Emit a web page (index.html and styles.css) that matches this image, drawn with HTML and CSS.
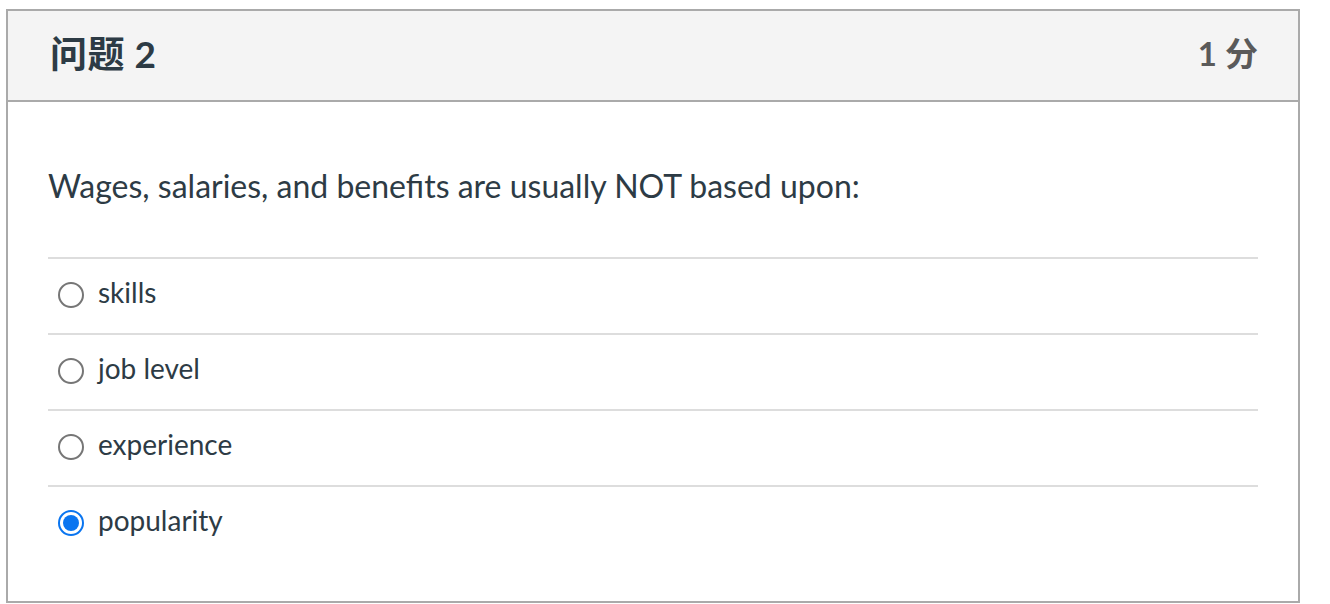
FILE: index.html
```html
<!DOCTYPE html>
<html lang="zh">
<head>
<meta charset="utf-8">
<link rel="stylesheet" href="styles.css">
</head>
<body>
<div class="question">
  <div class="q-header">
    <h2 class="q-title">问题 2</h2>
    <span class="q-points">1 分</span>
  </div>
  <div class="q-body">
    <p class="q-text">Wages, salaries, and benefits are usually NOT based upon:</p>
    <ul class="answers">
      <li class="answer"><span class="radio"></span><span class="label">skills</span></li>
      <li class="answer"><span class="radio"></span><span class="label">job level</span></li>
      <li class="answer"><span class="radio"></span><span class="label">experience</span></li>
      <li class="answer"><span class="radio checked"></span><span class="label">popularity</span></li>
    </ul>
  </div>
</div>
</body>
</html>
```

FILE: styles.css
```css
html, body {
  margin: 0;
  padding: 0;
  background: #fff;
}
body {
  padding: 9px 0 0 6px;
  font-family: Lato, "Noto Sans CJK SC", sans-serif;
  color: #2d3b45;
}
.question {
  width: 1294px;
  height: 594px;
  box-sizing: border-box;
  border: 2px solid #aaaaaa;
}
.q-header {
  display: flex;
  align-items: center;
  justify-content: space-between;
  box-sizing: border-box;
  height: 91px;
  background: #f4f4f4;
  border-bottom: 2px solid #aaaaaa;
  padding: 0 40px 8px 42px;
}
.q-title {
  margin: 0;
  font-family: Lato, "Noto Sans CJK SC", sans-serif;
  font-size: 37px;
  font-weight: 700;
  color: #2d3b45;
  letter-spacing: 0.5px;
}
.q-points {
  font-family: Lato, "Noto Sans CJK SC", sans-serif;
  font-size: 33px;
  font-weight: 700;
  color: #5a5a5a;
}
.q-body {
  padding: 0 40px;
}
.q-text {
  margin: 0 0 49px 0;
  padding: 62px 0 0 0;
  font-size: 32px;
  line-height: 44px;
}
.answers {
  list-style: none;
  margin: 0;
  padding: 0;
}
.answer {
  display: flex;
  align-items: center;
  box-sizing: border-box;
  height: 76px;
  border-top: 2px solid #dddddd;
  padding: 0 0 4px 10px;
}
.radio {
  width: 22px;
  height: 22px;
  border: 2px solid #767676;
  border-radius: 50%;
  flex: none;
  position: relative;
  margin-top: 2px;
}
.radio.checked {
  border-color: #0a75f0;
}
.radio.checked::after {
  content: "";
  position: absolute;
  left: 3px;
  top: 3px;
  width: 16px;
  height: 16px;
  border-radius: 50%;
  background: #0a75f0;
}
.label {
  margin: 0 0 4px 14px;
  font-size: 28px;
}
```
